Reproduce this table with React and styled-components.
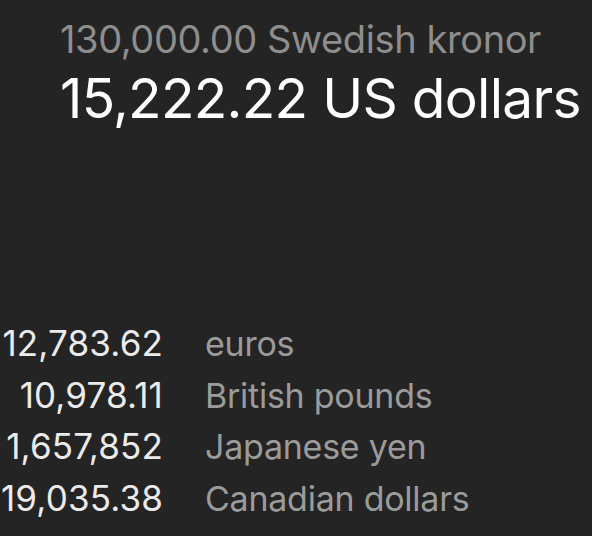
import React from 'react';
import styled, { createGlobalStyle } from 'styled-components';

const GlobalStyle = createGlobalStyle`
  html, body {
    margin: 0;
    padding: 0;
    background: #242424;
  }
  body {
    font-family: Inter, "Noto Sans", sans-serif;
  }
`;

const Screen = styled.div`
  width: 592px;
  height: 536px;
  background: #242424;
  display: flex;
  flex-direction: column;
  justify-content: space-between;
  overflow: hidden;
`;

const Header = styled.div`
  padding: 17px 0 0 60px;
  display: flex;
  flex-direction: column;
`;

const Source = styled.div`
  color: #8e8e8e;
  font-size: 38px;
  line-height: 44px;
  letter-spacing: -0.4px;
  white-space: nowrap;
`;

const Target = styled.div`
  color: #ffffff;
  font-size: 55px;
  line-height: 62px;
  margin-top: 6px;
  letter-spacing: -0.7px;
  white-space: nowrap;
`;

const List = styled.div`
  display: grid;
  grid-template-columns: 163px auto;
  column-gap: 42px;
  padding-bottom: 12px;
`;

const Amount = styled.div`
  color: #ebebeb;
  font-size: 35px;
  line-height: 51.5px;
  text-align: right;
  letter-spacing: 0.15px;
  white-space: nowrap;
`;

const Name = styled.div`
  color: #9b9b9b;
  font-size: 34px;
  line-height: 51.5px;
  letter-spacing: -0.25px;
  white-space: nowrap;
`;

const rates = [
  { amount: '12,783.62', name: 'euros' },
  { amount: '10,978.11', name: 'British pounds' },
  { amount: '1,657,852', name: 'Japanese yen' },
  { amount: '19,035.38', name: 'Canadian dollars' },
];

export default function App() {
  return (
    <>
      <GlobalStyle />
      <Screen>
        <Header>
          <Source>130,000.00 Swedish kronor</Source>
          <Target>15,222.22 US dollars</Target>
        </Header>
        <List>
          {rates.map((r) => (
            <React.Fragment key={r.name}>
              <Amount>{r.amount}</Amount>
              <Name>{r.name}</Name>
            </React.Fragment>
          ))}
        </List>
      </Screen>
    </>
  );
}
